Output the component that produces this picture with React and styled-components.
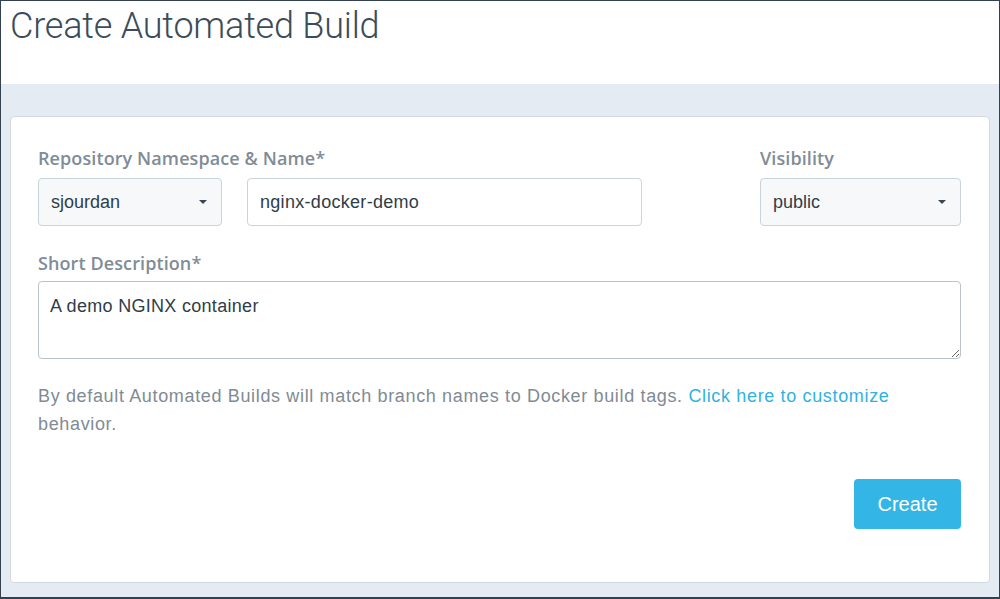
import React from 'react'
import styled, { createGlobalStyle } from 'styled-components'

const GlobalStyle = createGlobalStyle`
  html, body {
    margin: 0;
    padding: 0;
    background: #ffffff;
  }
  * {
    box-sizing: border-box;
  }
`

const Frame = styled.div`
  width: 1000px;
  height: 599px;
  border: 1px solid #33424e;
  border-bottom-width: 2px;
  display: flex;
  flex-direction: column;
  font-family: "Liberation Sans", Arial, sans-serif;
  overflow: hidden;
`

const Header = styled.div`
  height: 83px;
  background: #ffffff;
  padding: 2px 0 0 9px;
`

const Title = styled.h1`
  margin: 0;
  font-family: Roboto, "Liberation Sans", sans-serif;
  font-weight: 300;
  font-size: 36px;
  line-height: 46px;
  color: #3b4c5a;
  letter-spacing: -0.2px;
`

const Body = styled.div`
  flex: 1;
  background: #e4ebf2;
  padding: 32px 9px 14px 9px;
  display: flex;
`

const Card = styled.div`
  flex: 1;
  background: #ffffff;
  border: 1px solid #d3dadf;
  border-radius: 4px;
  padding: 30px 28px 0 27px;
  display: flex;
  flex-direction: column;
`

const Row = styled.div`
  display: flex;
  align-items: flex-start;
`

const Field = styled.div`
  display: flex;
  flex-direction: column;
  margin-left: ${p => p.$push ? 'auto' : '0'};
`

const Label = styled.label`
  font-family: "Open Sans", "Liberation Sans", sans-serif;
  font-weight: 600;
  font-size: 18px;
  letter-spacing: 0.1px;
  line-height: 22px;
  color: #808c96;
  margin-bottom: ${p => p.$gap || 9}px;
`

const Controls = styled.div`
  display: flex;
  gap: 25px;
`

const Select = styled.div`
  position: relative;
  width: ${p => p.$w}px;
  height: 48px;
  background: #f6f8fa;
  border: 1px solid #c9d3da;
  border-radius: 4px;
  padding: 0 12px;
  display: flex;
  align-items: center;
  font-size: 18px;
  color: #2f3d48;
`

const Caret = styled.span`
  margin-left: auto;
  width: 0;
  height: 0;
  border-left: 4px solid transparent;
  border-right: 4px solid transparent;
  border-top: 4px solid #3a4651;
  margin-right: 2px;
`

const TextInput = styled.input`
  width: ${p => p.$w}px;
  height: 48px;
  background: #ffffff;
  border: 1px solid #cbd4da;
  border-radius: 4px;
  padding: 0 12px;
  font-family: "Liberation Sans", Arial, sans-serif;
  font-size: 18px;
  letter-spacing: 0.3px;
  color: #2f3d48;
  outline: none;
`

const TextArea = styled.textarea`
  width: 100%;
  height: 78px;
  border: 1px solid #b9c3ca;
  border-radius: 4px;
  padding: 13px 11px;
  font-family: "Liberation Sans", Arial, sans-serif;
  font-size: 18px;
  letter-spacing: 0.3px;
  line-height: 22px;
  color: #2f3d48;
  outline: none;
  resize: vertical;
  display: block;
`

const Section = styled.div`
  margin-top: ${p => p.$top}px;
  display: flex;
  flex-direction: column;
`

const Help = styled.p`
  margin: 23px 0 0 0;
  font-size: 18px;
  letter-spacing: 0.65px;
  line-height: 28px;
  color: #7f8b95;
`

const Link = styled.a`
  color: #2fb2e3;
  text-decoration: none;
`

const Actions = styled.div`
  display: flex;
  justify-content: flex-end;
  margin-top: 41px;
`

const Button = styled.button`
  width: 107px;
  height: 50px;
  background: #33b6e5;
  border: none;
  border-radius: 4px;
  color: #ffffff;
  font-family: "Liberation Sans", Arial, sans-serif;
  font-size: 20px;
  cursor: pointer;
`

export default function App() {
  return (
    <>
      <GlobalStyle />
      <Frame>
        <Header>
          <Title>Create Automated Build</Title>
        </Header>
        <Body>
          <Card>
            <Row>
              <Field>
                <Label>Repository Namespace &amp; Name*</Label>
                <Controls>
                  <Select $w={184}>
                    sjourdan
                    <Caret />
                  </Select>
                  <TextInput $w={395} value="nginx-docker-demo" readOnly />
                </Controls>
              </Field>
              <Field $push>
                <Label>Visibility</Label>
                <Select $w={201}>
                  public
                  <Caret />
                </Select>
              </Field>
            </Row>
            <Section $top={26}>
              <Label $gap={7}>Short Description*</Label>
              <TextArea value="A demo NGINX container" readOnly />
            </Section>
            <Help>
              By default Automated Builds will match branch names to Docker build tags.{' '}
              <Link href="#">Click here to customize</Link> behavior.
            </Help>
            <Actions>
              <Button>Create</Button>
            </Actions>
          </Card>
        </Body>
      </Frame>
    </>
  )
}
